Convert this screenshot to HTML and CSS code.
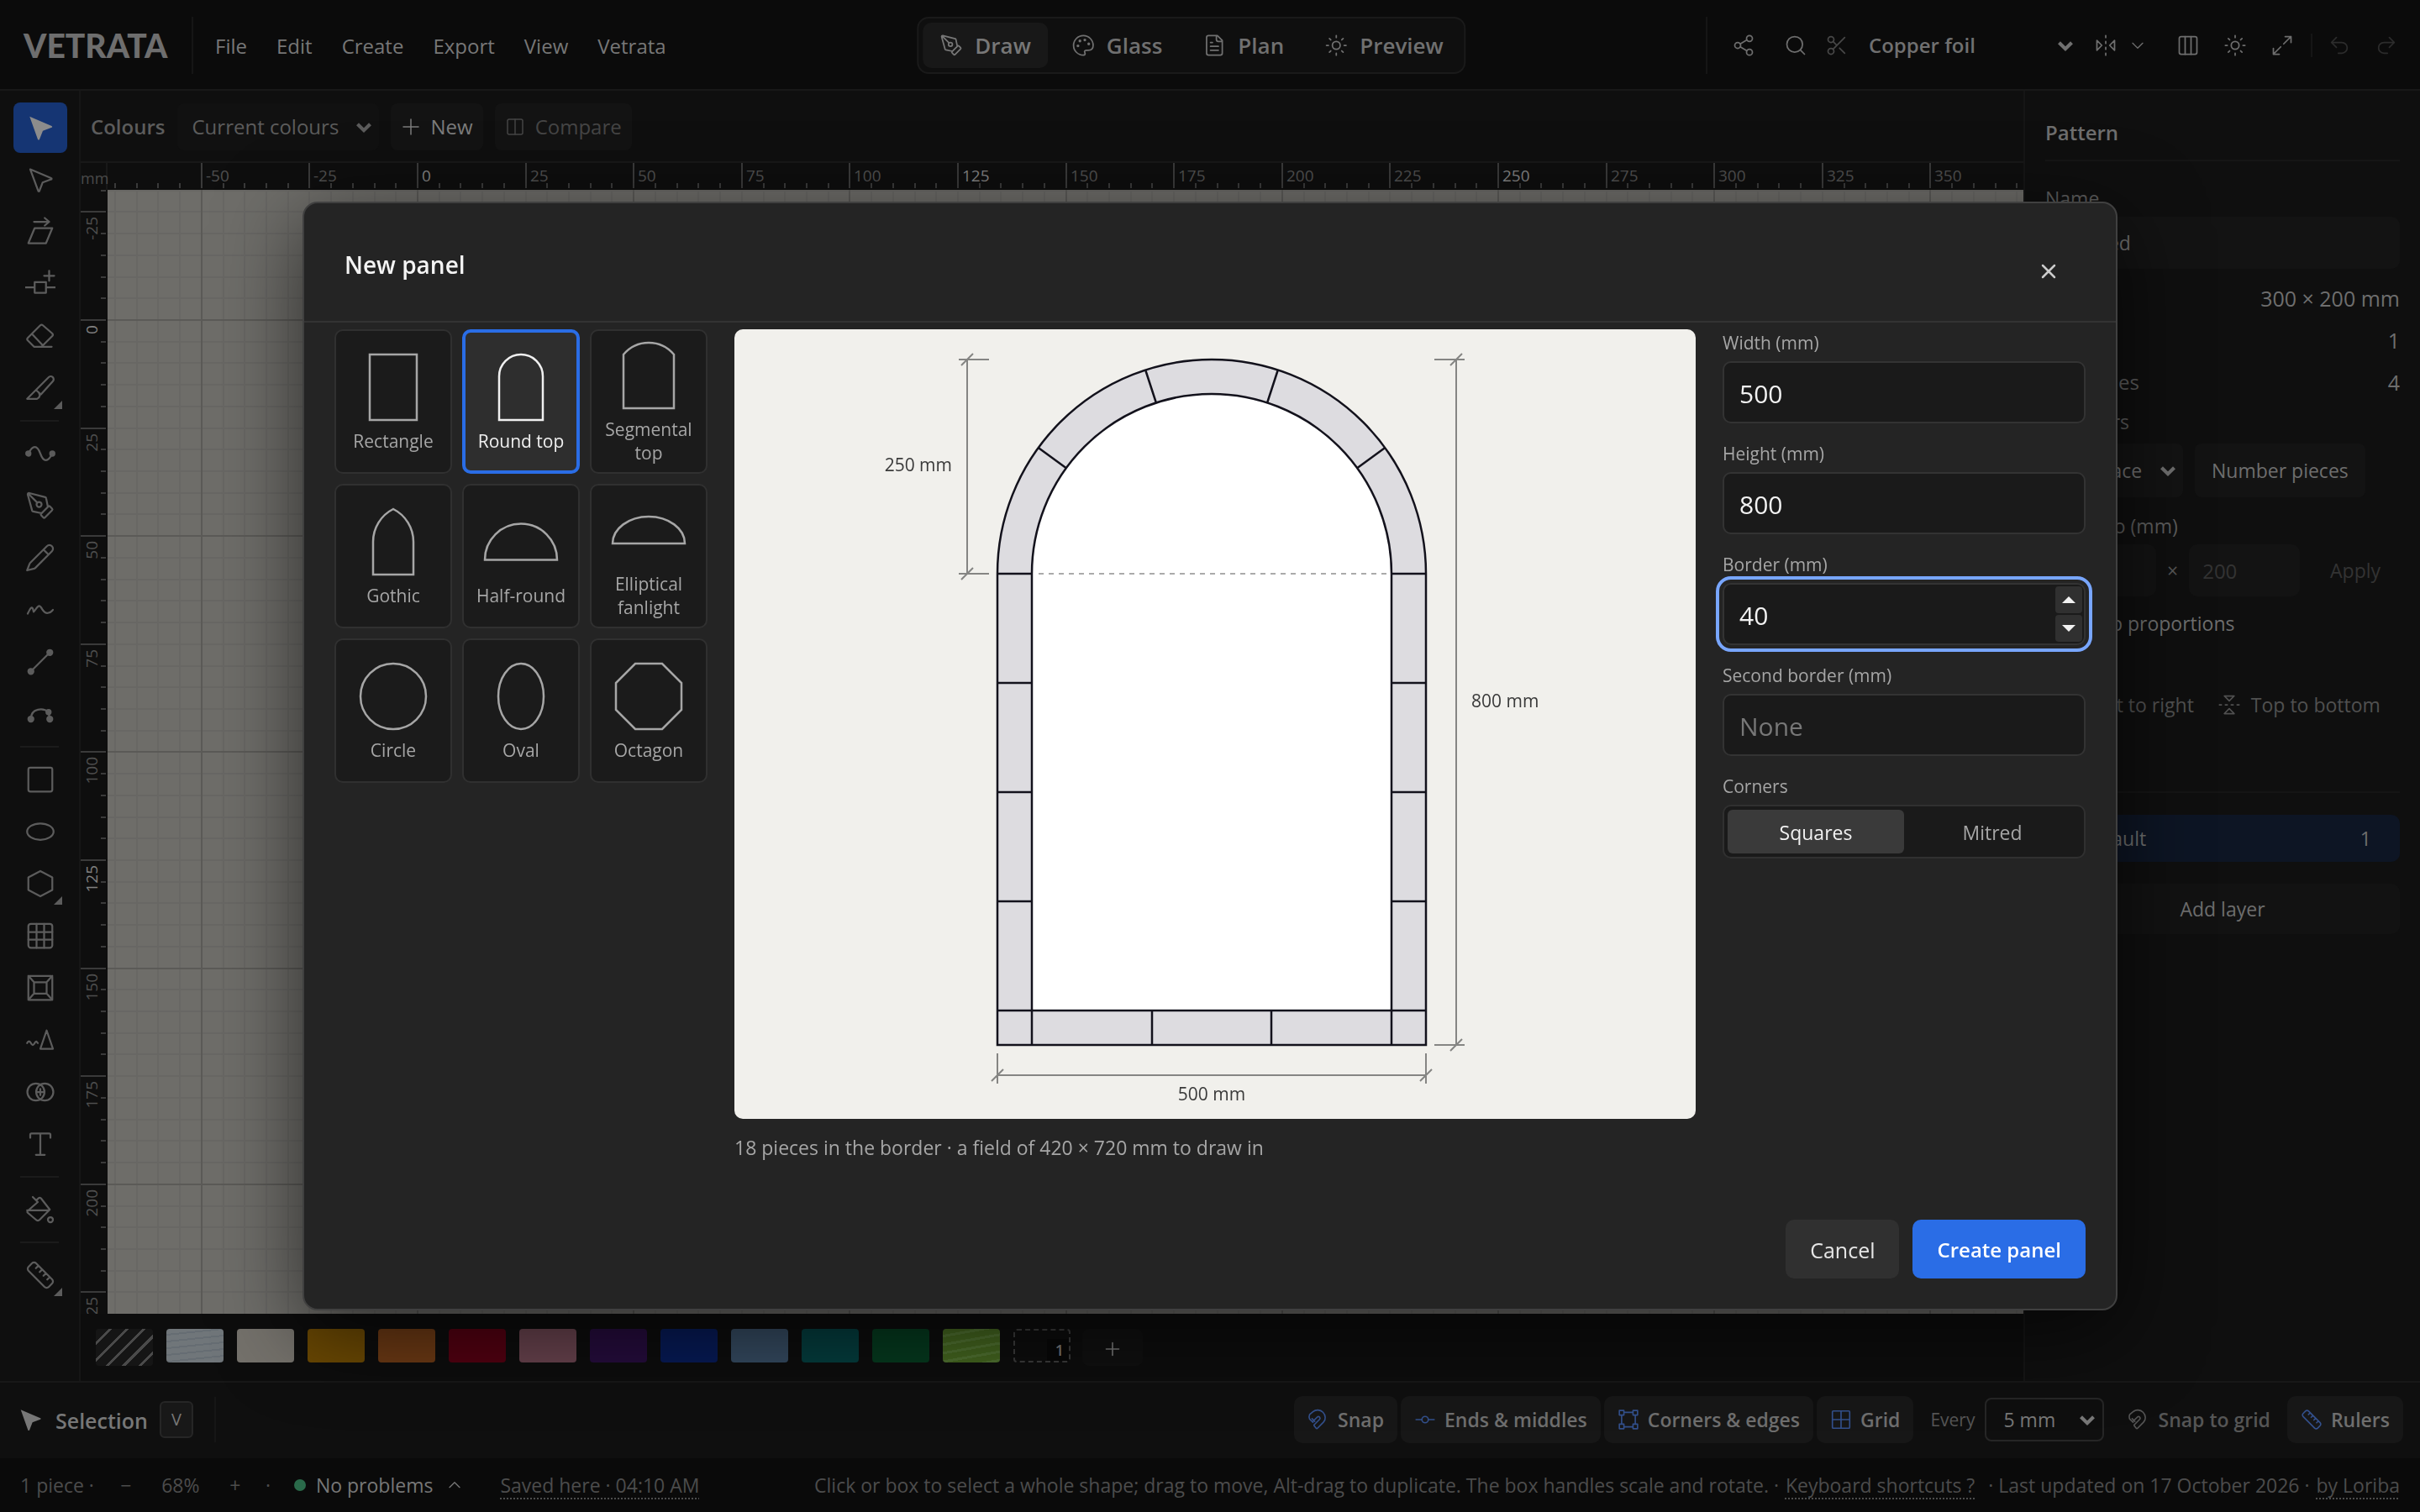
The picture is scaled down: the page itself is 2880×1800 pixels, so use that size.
FILE: index.html
```html
<!DOCTYPE html>
<html lang="en">
<head>
<meta charset="utf-8">
<title>Vetrata – New panel</title>
<link rel="stylesheet" href="styles.css">
</head>
<body>
<svg class="sprite" aria-hidden="true">
  <symbol id="i-pointer" viewBox="0 0 24 24"><path d="M3.5 3.2 21 10.6a.7.7 0 0 1 0 1.3l-7 2.6-2.7 6.8a.7.7 0 0 1-1.3 0Z" fill="currentColor" stroke="none"/></symbol>
  <symbol id="i-pointer-o" viewBox="0 0 24 24"><path d="M4 3.7 20.5 10.7a.5.5 0 0 1 0 1l-6.7 2.5-2.5 6.5a.5.5 0 0 1-1 0Z"/></symbol>
  <symbol id="i-skew" viewBox="0 0 24 24"><path d="M7.500 9h14l-5 12h-14ZM7 4h12M15.500 1l3.500 3-3.500 3"/></symbol>
  <symbol id="i-addnode" viewBox="0 0 24 24"><path d="M7.500 10.500h9v8.500h-9zM0 14.750h7.500M16.500 14.750H24M19 1.500v8M15 5.500h8"/></symbol>
  <symbol id="i-eraser" viewBox="0 0 24 24"><path d="M7 20.500 2 15.500a1.500 1.500 0 0 1 0-2L12 3.500a1.500 1.500 0 0 1 2 0L21.500 10a1.500 1.500 0 0 1 0 2L13 20.500ZM5.500 10.500l8.500 9M7 20.500h14"/></symbol>
  <symbol id="i-knife" viewBox="0 0 24 24"><path d="M8.500 13.500 18.500 3.500a2 2 0 0 1 3.500 3L12.500 17ZM8.500 13.500 1.500 20.500H9.500a3 3 0 0 0 1.500-4.500"/></symbol>
  <symbol id="i-curve" viewBox="0 0 24 24"><path d="M2.500 12C6 5 9.500 5 12 12s6 7 9.500 0"/><circle cx="2.500" cy="12" r="1.700" fill="currentColor"/><circle cx="21.500" cy="12" r="1.700" fill="currentColor"/></symbol>
  <symbol id="i-pen" viewBox="0 0 24 24"><path d="M15.700 21.300a1 1 0 0 1-1.400 0l-1.600-1.600a1 1 0 0 1 0-1.400l5.600-5.600a1 1 0 0 1 1.400 0l1.600 1.600a1 1 0 0 1 0 1.400zM18 13l-1.400-6.900a1 1 0 0 0-.7-.8L3.200 2a1 1 0 0 0-1.200 1.200l3.500 12.700a1 1 0 0 0 .8.700L13 18M2.300 2.300l7.300 7.300"/><circle cx="11" cy="11" r="2"/></symbol>
  <symbol id="i-pencil" viewBox="0 0 24 24"><path d="M21.200 6.800a2.700 2.700 0 0 0-4-4L4 16a2 2 0 0 0-.5.800L1.500 22l5.700-1.400a2 2 0 0 0 .8-.5zM14.500 5.500l4 4"/></symbol>
  <symbol id="i-scribble" viewBox="0 0 24 24"><path d="M2 15c2-4 3-6 4-4s0 4 2 1 3-4 4.500-2 2.500 5 5.500 4.500 3-1.500 4-2.500"/></symbol>
  <symbol id="i-line" viewBox="0 0 24 24"><path d="M4.500 19.500l15-15"/><circle cx="4.500" cy="19.500" r="2" fill="currentColor"/><circle cx="19.500" cy="4.500" r="2" fill="currentColor"/></symbol>
  <symbol id="i-arc" viewBox="0 0 24 24"><path d="M4.500 16c0-9 10-9 14-5.500"/><circle cx="4.500" cy="16" r="2" fill="currentColor"/><circle cx="19.500" cy="16" r="2" fill="currentColor"/><circle cx="18.500" cy="10.500" r="1.700" fill="currentColor"/><path d="M18.500 10.500l1 5.500"/></symbol>
  <symbol id="i-rect" viewBox="0 0 24 24"><rect x="2.500" y="2.500" width="19" height="19" rx="1.500"/></symbol>
  <symbol id="i-ellipse" viewBox="0 0 24 24"><ellipse cx="12" cy="12" rx="10.500" ry="6.500"/></symbol>
  <symbol id="i-hex" viewBox="0 0 24 24"><path d="M12 2l9.500 5v10L12 22l-9.500-5V7z"/></symbol>
  <symbol id="i-grid" viewBox="0 0 24 24"><rect x="2.500" y="2.500" width="19" height="19" rx="2"/><path d="M2.500 9h19M2.500 15h19M9 2.500v19M15 2.500v19"/></symbol>
  <symbol id="i-frame" viewBox="0 0 24 24"><rect x="2.500" y="2.500" width="19" height="19" rx="1"/><path d="M7 7.500h10v9H7zM2.500 2.500l4.500 5M21.500 2.500l-4.500 5M2.500 21.500l4.500-5M21.500 21.500l-4.500-5"/></symbol>
  <symbol id="i-smooth" viewBox="0 0 24 24"><path d="M1.500 14.500c1-2 2-2 3 0s2 2 3 0 1.500-1.500 2.500 0M12 19 17 4.500 22 19z"/></symbol>
  <symbol id="i-venn" viewBox="0 0 24 24"><circle cx="8.500" cy="12" r="6.800"/><circle cx="15.500" cy="12" r="6.800"/><path d="M12 9.500v5M9.500 12h5"/></symbol>
  <symbol id="i-type" viewBox="0 0 24 24"><path d="M4 7V4.500a1 1 0 0 1 1-1h14a1 1 0 0 1 1 1V7M12 3.500v17M8.500 20.500h7"/></symbol>
  <symbol id="i-bucket" viewBox="0 0 24 24"><path d="M6 2l4 4M10 6 2 13a1 1 0 0 0 0 1.500L8.500 20a2 2 0 0 0 3 0L19.500 12 12.500 3a1.500 1.500 0 0 0-2 0L9 4.500M1.500 12.500h17.500"/><circle cx="20" cy="20" r="2"/></symbol>
  <symbol id="i-ruler" viewBox="0 0 24 24"><path d="M21.300 15.300a2.400 2.400 0 0 1 0 3.400l-2.600 2.600a2.400 2.400 0 0 1-3.400 0L2.700 8.700a2.400 2.400 0 0 1 0-3.400l2.600-2.600a2.400 2.400 0 0 1 3.400 0ZM14.500 12.500l2-2M11.500 9.500l2-2M8.500 6.500l2-2M17.500 15.500l2-2"/></symbol>
  <symbol id="i-palette" viewBox="0 0 24 24"><path d="M12 22a10 10 0 1 1 10-10c0 4-2.500 5-5 5h-2c-2 0-2 1.500-1.500 2.500S14 22 12 22Z"/><g fill="currentColor"><circle cx="13.500" cy="6.500" r=".7"/><circle cx="17.500" cy="10.500" r=".7"/><circle cx="6.500" cy="12.500" r=".7"/><circle cx="8.500" cy="7.500" r=".7"/></g></symbol>
  <symbol id="i-file" viewBox="0 0 24 24"><path d="M15 2H6a2 2 0 0 0-2 2v16a2 2 0 0 0 2 2h12a2 2 0 0 0 2-2V7zM14 2v4a2 2 0 0 0 2 2h4M8 9h2M8 13h8M8 17h8"/></symbol>
  <symbol id="i-sun" viewBox="0 0 24 24"><circle cx="12" cy="12" r="4"/><path d="M12 2v2M12 20v2M5 5l1.400 1.400M17.600 17.600 19 19M2 12h2M20 12h2M6.400 17.600 5 19M19 5l-1.400 1.400"/></symbol>
  <symbol id="i-share" viewBox="0 0 24 24"><circle cx="18" cy="5" r="3"/><circle cx="6" cy="12" r="3"/><circle cx="18" cy="19" r="3"/><path d="M8.600 13.500l6.800 4M15.400 6.500l-6.800 4"/></symbol>
  <symbol id="i-search" viewBox="0 0 24 24"><circle cx="11" cy="11" r="8"/><path d="M21 21l-4.300-4.300"/></symbol>
  <symbol id="i-scissors" viewBox="0 0 24 24"><circle cx="6" cy="6" r="3"/><circle cx="6" cy="18" r="3"/><path d="M8.100 8.100 12 12M20 4 8.100 15.900M14.800 14.800 20 20"/></symbol>
  <symbol id="i-mirror" viewBox="0 0 24 24"><path d="M3 7l5 5-5 5zM21 7l-5 5 5 5zM12 20v2M12 14v2M12 8v2M12 2v2"/></symbol>
  <symbol id="i-columns" viewBox="0 0 24 24"><rect x="3" y="3" width="18" height="18" rx="2"/><path d="M9 3v18M15 3v18"/></symbol>
  <symbol id="i-split" viewBox="0 0 24 24"><rect x="3" y="3" width="18" height="18" rx="2"/><path d="M12 3v18"/></symbol>
  <symbol id="i-expand" viewBox="0 0 24 24"><path d="M15 3h6v6M21 3l-7.500 7.500M3 21l7.500-7.500M9 21H3v-6"/></symbol>
  <symbol id="i-undo" viewBox="0 0 24 24"><path d="M9 14 4 9l5-5M4 9h10.500a5.500 5.500 0 0 1 0 11H11"/></symbol>
  <symbol id="i-redo" viewBox="0 0 24 24"><path d="M15 14l5-5-5-5M20 9H9.500a5.500 5.500 0 0 0 0 11H13"/></symbol>
  <symbol id="i-chev" viewBox="0 0 24 24"><path d="M3 8l9 9 9-9"/></symbol>
  <symbol id="i-up" viewBox="0 0 24 24"><path d="M3 16l9-9 9 9"/></symbol>
  <symbol id="i-plus" viewBox="0 0 24 24"><path d="M12 3v18M3 12h18"/></symbol>
  <symbol id="i-x" viewBox="0 0 24 24"><path d="M5 5l14 14M19 5 5 19"/></symbol>
  <symbol id="i-magnet" viewBox="0 0 24 24"><path d="M6 15l-3.600-3.600a6 6 0 0 1 0-5L6 3.400a8 8 0 0 1 11 .5c3 3 3.500 8 .5 11l-6.500 6.600a1 1 0 0 1-1.500 0L7.500 19a1 1 0 0 1 0-1.500l6-6a1.800 1.800 0 0 0-2.500-2.500L6 14M5 11l3 3"/></symbol>
  <symbol id="i-node" viewBox="0 0 24 24"><circle cx="12" cy="12" r="3.500"/><path d="M2 12h6.500M15.500 12H22"/></symbol>
  <symbol id="i-corners" viewBox="0 0 24 24"><path d="M2 2h5v5H2zM17 2h5v5h-5zM2 17h5v5H2zM17 17h5v5h-5zM7 4h10M7 20h10M4.500 7v10M19.500 7v10"/></symbol>
  <symbol id="i-window" viewBox="0 0 24 24"><rect x="2.500" y="2.500" width="19" height="19" rx="1"/><path d="M12 2.500v19M2.500 12h19"/></symbol>
</svg>

<div class="app">
  <header class="topbar">
    <div class="brand">VETRATA</div>
    <nav class="menus">
      <button>File</button><button>Edit</button><button>Create</button><button>Export</button><button>View</button><button>Vetrata</button>
    </nav>
    <div class="modes">
      <button class="mode is-on"><svg class="ic"><use href="#i-pen"/></svg>Draw</button>
      <button class="mode"><svg class="ic"><use href="#i-palette"/></svg>Glass</button>
      <button class="mode"><svg class="ic"><use href="#i-file"/></svg>Plan</button>
      <button class="mode"><svg class="ic"><use href="#i-sun"/></svg>Preview</button>
    </div>
    <div class="actions">
      <button class="iconbtn" aria-label="Share"><svg class="ic"><use href="#i-share"/></svg></button>
      <button class="iconbtn" aria-label="Search"><svg class="ic"><use href="#i-search"/></svg></button>
      <label class="technique"><svg class="ic dim"><use href="#i-scissors"/></svg>
        <span class="select foil"><select aria-label="Technique"><option>Copper foil</option></select><svg class="chev"><use href="#i-chev"/></svg></span></label>
      <button class="mirrorbtn" aria-label="Symmetry"><svg class="ic"><use href="#i-mirror"/></svg><svg class="tiny"><use href="#i-chev"/></svg></button>
      <button class="iconbtn" aria-label="Panels"><svg class="ic"><use href="#i-columns"/></svg></button>
      <button class="iconbtn" aria-label="Theme"><svg class="ic"><use href="#i-sun"/></svg></button>
      <button class="iconbtn" aria-label="Full screen"><svg class="ic"><use href="#i-expand"/></svg></button>
      <span class="history">
        <button class="iconbtn" aria-label="Undo" disabled><svg class="ic"><use href="#i-undo"/></svg></button>
        <button class="iconbtn" aria-label="Redo" disabled><svg class="ic"><use href="#i-redo"/></svg></button>
      </span>
    </div>
  </header>

  <main class="workspace">
    <aside class="tools">
      <div class="toolgroup">
        <button class="tool is-on" aria-label="Selection"><svg><use href="#i-pointer"/></svg></button>
        <button class="tool" aria-label="Direct selection"><svg><use href="#i-pointer-o"/></svg></button>
        <button class="tool" aria-label="Skew"><svg><use href="#i-skew"/></svg></button>
        <button class="tool" aria-label="Add node"><svg><use href="#i-addnode"/></svg></button>
        <button class="tool" aria-label="Eraser"><svg><use href="#i-eraser"/></svg></button>
        <button class="tool has-more" aria-label="Knife"><svg><use href="#i-knife"/></svg></button>
      </div>
      <div class="toolgroup">
        <button class="tool" aria-label="Curve"><svg><use href="#i-curve"/></svg></button>
        <button class="tool" aria-label="Pen"><svg><use href="#i-pen"/></svg></button>
        <button class="tool" aria-label="Pencil"><svg><use href="#i-pencil"/></svg></button>
        <button class="tool" aria-label="Freehand"><svg><use href="#i-scribble"/></svg></button>
        <button class="tool" aria-label="Line"><svg><use href="#i-line"/></svg></button>
        <button class="tool" aria-label="Arc"><svg><use href="#i-arc"/></svg></button>
      </div>
      <div class="toolgroup">
        <button class="tool" aria-label="Rectangle"><svg><use href="#i-rect"/></svg></button>
        <button class="tool" aria-label="Ellipse"><svg><use href="#i-ellipse"/></svg></button>
        <button class="tool has-more" aria-label="Polygon"><svg><use href="#i-hex"/></svg></button>
        <button class="tool" aria-label="Grid"><svg><use href="#i-grid"/></svg></button>
        <button class="tool" aria-label="Border"><svg><use href="#i-frame"/></svg></button>
        <button class="tool" aria-label="Shape from sketch"><svg><use href="#i-smooth"/></svg></button>
        <button class="tool" aria-label="Combine"><svg><use href="#i-venn"/></svg></button>
        <button class="tool" aria-label="Text"><svg><use href="#i-type"/></svg></button>
      </div>
      <div class="toolgroup">
        <button class="tool" aria-label="Fill"><svg><use href="#i-bucket"/></svg></button>
      </div>
      <div class="toolgroup">
        <button class="tool has-more" aria-label="Measure"><svg><use href="#i-ruler"/></svg></button>
      </div>
    </aside>

    <section class="stage">
      <div class="colourbar">
        <label for="palette">Colours</label>
        <span class="select palette"><select id="palette"><option>Current colours</option></select><svg class="chev"><use href="#i-chev"/></svg></span>
        <button class="chip"><svg class="ic"><use href="#i-plus"/></svg>New</button>
        <button class="chip" disabled><svg class="ic"><use href="#i-split"/></svg>Compare</button>
      </div>
      <div class="board">
        <div class="unit">mm</div>
        <svg class="ruler-x" id="ruler-x"></svg>
        <svg class="ruler-y" id="ruler-y"></svg>
        <svg class="canvas" id="canvas"></svg>
      </div>
      <div class="tray">
        <button class="swatch hatch" aria-label="No glass"></button>
        <button class="swatch clear" aria-label="Clear"></button>
        <button class="swatch" style="background:#74716b" aria-label="Opal"></button>
        <button class="swatch" style="background:#6a4803" aria-label="Amber"></button>
        <button class="swatch" style="background:#6b3914" aria-label="Orange"></button>
        <button class="swatch" style="background:#520111" aria-label="Red"></button>
        <button class="swatch" style="background:#67424d" aria-label="Pink"></button>
        <button class="swatch" style="background:#250c3c" aria-label="Violet"></button>
        <button class="swatch" style="background:#071a55" aria-label="Cobalt"></button>
        <button class="swatch" style="background:#34495f" aria-label="Sky"></button>
        <button class="swatch" style="background:#043c3d" aria-label="Teal"></button>
        <button class="swatch" style="background:#05391e" aria-label="Green"></button>
        <button class="swatch streaky" aria-label="Streaky green"></button>
        <button class="swatch empty" aria-label="Unassigned"><span>1</span></button>
        <button class="addswatch" aria-label="Add glass"><svg><use href="#i-plus"/></svg></button>
      </div>
    </section>

    <aside class="inspector">
      <h2>Pattern</h2>
      <label for="pname">Name</label>
      <input id="pname" type="text" value="Untitled">
      <dl>
        <div><dt>Size</dt><dd>300 × 200 mm</dd></div>
        <div><dt>Pieces</dt><dd>1</dd></div>
        <div><dt>Lead lines</dt><dd>4</dd></div>
      </dl>
      <label for="numbers">Numbers</label>
      <div class="row numbers">
        <span class="select place"><select id="numbers"><option>In place</option></select><svg class="chev"><use href="#i-chev"/></svg></span>
        <button class="chip">Number pieces</button>
      </div>
      <label for="scalew">Resize to (mm)</label>
      <div class="row scale">
        <input id="scalew" type="text" value="300"><span>×</span><input type="text" value="200" aria-label="Scale height"><button disabled>Apply</button>
      </div>
      <label class="check"><input type="checkbox" checked>Keep proportions</label>
      <div class="row flips">
        <button><svg class="ic"><use href="#i-mirror"/></svg>Left to right</button>
        <button><svg class="ic turned"><use href="#i-mirror"/></svg>Top to bottom</button>
      </div>
      <div class="layers">
        <button class="layer"><span>Default</span><span>1</span></button>
        <button class="addlayer">Add layer</button>
      </div>
    </aside>
  </main>

  <section class="optionbar">
    <div class="current"><svg class="ic"><use href="#i-pointer"/></svg><strong>Selection</strong><kbd>V</kbd></div>
    <div class="snaps">
      <button class="snap is-on"><svg class="ic"><use href="#i-magnet"/></svg>Snap</button>
      <button class="snap is-on"><svg class="ic"><use href="#i-node"/></svg>Ends &amp; middles</button>
      <button class="snap is-on"><svg class="ic"><use href="#i-corners"/></svg>Corners &amp; edges</button>
      <button class="snap is-on"><svg class="ic"><use href="#i-window"/></svg>Grid</button>
      <label for="every">Every</label>
      <span class="select every"><select id="every"><option>5 mm</option></select><svg class="chev"><use href="#i-chev"/></svg></span>
      <button class="snap"><svg class="ic"><use href="#i-magnet"/></svg>Snap to grid</button>
      <button class="snap is-on"><svg class="ic"><use href="#i-ruler"/></svg>Rulers</button>
    </div>
  </section>

  <footer class="status">
    <div class="left">
      <span>1 piece ·</span>
      <button class="zoom">−</button><span class="pct">68%</span><button class="zoom">+</button><span class="sep">·</span>
      <button class="problems"><i></i>No problems<svg><use href="#i-up"/></svg></button>
      <a href="#saved">Saved here · 04:10 AM</a>
    </div>
    <div class="right">
      <span>Click or box to select a whole shape; drag to move, Alt-drag to duplicate. The box handles scale and rotate. ·</span>
      <a href="#keys">Keyboard shortcuts ?</a>
      <span class="updated">· Last updated on 17 October 2026 ·</span>
      <a href="#loriba">by Loriba</a>
    </div>
  </footer>
</div>

<div class="backdrop">
  <section class="dialog" role="dialog" aria-modal="true" aria-labelledby="dlg-title">
    <header><h1 id="dlg-title">New panel</h1><button class="close" aria-label="Close"><svg><use href="#i-x"/></svg></button></header>
    <div class="content">
      <div class="shapes">
        <button><svg viewBox="0 0 96 88"><path d="M20 5h56v78H20z"/></svg>Rectangle</button>
        <button class="is-on"><svg viewBox="0 0 96 88"><path d="M22 83V31a26 26 0 0 1 52 0v52z"/></svg>Round top</button>
        <button><svg viewBox="0 0 96 88"><path d="M18 83V19a39 39 0 0 1 60 0v64z"/></svg>Segmental top</button>
        <button><svg viewBox="0 0 96 88"><path d="M24 83V44a43.700 43.700 0 0 1 24-39 43.700 43.700 0 0 1 24 39v39z"/></svg>Gothic</button>
        <button><svg viewBox="0 0 96 88"><path d="M5 65.500a43 43 0 0 1 86 0z"/></svg>Half-round</button>
        <button><svg viewBox="0 0 96 88"><path d="M5 60a43 32 0 0 1 86 0z"/></svg>Elliptical fanlight</button>
        <button><svg viewBox="0 0 96 88"><circle cx="48" cy="44" r="39"/></svg>Circle</button>
        <button><svg viewBox="0 0 96 88"><ellipse cx="48" cy="44" rx="27" ry="39"/></svg>Oval</button>
        <button><svg viewBox="0 0 96 88"><path d="M32 5h32l23 23v32L64 83H32L9 60V28z"/></svg>Octagon</button>
      </div>

      <figure class="preview">
        <svg viewBox="0 0 1144 940" role="img" aria-label="Panel preview">
          <path class="glass" d="M313 852V291a255 255 0 0 1 510 0v561z"/>
          <path class="field" d="M354 811V291a214 214 0 0 1 428 0v520z"/>
          <path class="lead" d="M313 291h41M313 421h41M313 551h41M313 681h41M313 811h41v41M782 291h41M782 421h41M782 551h41M782 681h41M823 811h-41v41M497 811v41M639 811v41M646.800 48.500l-12.700 39M489.200 48.500l12.700 39M774.300 141.100l-33.200 24.100M361.700 141.100l33.200 24.100"/>
          <path class="spring" d="M362 291h420"/>
          <path class="dim" d="M277 36v255M267 36h36M267 291h36M270 43l14-14M270 298l14-14M859 36v816M833 36h36M833 852h36M852 43l14-14M852 859l14-14M313 888h510M313 862v36M823 862v36M306 895l14-14M816 895l14-14"/>
          <text x="259" y="169" text-anchor="end">250 mm</text>
          <text x="877" y="450">800 mm</text>
          <text x="568" y="918" text-anchor="middle">500 mm</text>
        </svg>
        <figcaption>18 pieces in the border · a field of 420 × 720 mm to draw in</figcaption>
      </figure>

      <form class="fields">
        <div class="field-row"><label for="w">Width (mm)</label><input id="w" type="number" value="500"></div>
        <div class="field-row"><label for="h">Height (mm)</label><input id="h" type="number" value="800"></div>
        <div class="field-row"><label for="b">Border (mm)</label>
          <div class="stepper"><input id="b" type="number" value="40"><span class="steps"><button type="button" aria-label="Increase"><svg viewBox="0 0 16 8"><path d="M0 8 8 0l8 8z"/></svg></button><button type="button" aria-label="Decrease"><svg viewBox="0 0 16 8"><path d="M0 0l8 8 8-8z"/></svg></button></span></div></div>
        <div class="field-row"><label for="b2">Second border (mm)</label><input id="b2" type="number" placeholder="None"></div>
        <div class="field-row"><span class="lbl">Corners</span><div class="segmented"><button type="button" class="is-on">Squares</button><button type="button">Mitred</button></div></div>
      </form>
    </div>
    <footer><button class="cancel">Cancel</button><button class="create">Create panel</button></footer>
  </section>
</div>
<script src="rulers.js"></script>
</body>
</html>
```
FILE: styles.css
```css
* { box-sizing: border-box; }
html, body { margin: 0; height: 100%; }
body {
  font-family: "Open Sans", "Noto Sans", sans-serif;
  font-size: 24px;
  line-height: 32px;
  color: #777;
  background: #0b0b0b;
}
button, input, select { font: inherit; color: inherit; margin: 0; }
button { background: none; border: 0; padding: 0; }
select { appearance: none; background: none; border: 0; padding: 0; width: 100%; }
svg { fill: none; stroke: currentColor; stroke-width: 1.5; stroke-linecap: round; stroke-linejoin: round; flex: none; }
a { color: inherit; text-decoration: underline dotted; text-decoration-thickness: 2px; text-underline-offset: 6px; }
.sprite { display: none; }
.ic { width: 28px; height: 28px; }
.dim { opacity: .6; }

.select { display: grid; align-items: center; border-radius: 8px; }
.select > * { grid-area: 1 / 1; }
.select .chev { width: 20px; height: 20px; justify-self: end; stroke-width: 5; stroke-linecap: butt; stroke-linejoin: miter; pointer-events: none; }

.app { height: 100vh; display: grid; grid-template-rows: auto 1fr auto auto; overflow: hidden; }

/* top bar */
.topbar { display: grid; grid-template-columns: auto auto 1fr; align-items: center; padding: 20px 12px 18px 28px; border-bottom: 2px solid #181818; position: relative; }
.brand { font-family: Lato, sans-serif; font-weight: 900; font-size: 39px; line-height: 68px; color: #6e6e6e; width: 202px; border-right: 2px solid #161616; }
.menus { display: flex; gap: 35px; margin-left: 26px; padding-top: 2px; }
.modes { position: absolute; left: 50%; top: 20px; transform: translateX(-50%); margin-left: -22px; display: flex; gap: 8px; height: 68px; padding: 5px; border: 2px solid #1a1a1a; border-radius: 14px; background: #0f0f0f; }
.mode { display: flex; align-items: center; gap: 14px; padding: 0 20px; border-radius: 10px; font-weight: 600; color: #707070; font-size: 26px; }
.mode.is-on { background: #181818; color: #777; }
.actions { justify-self: end; display: flex; align-items: center; height: 68px; padding-left: 12px; border-left: 2px solid #161616; color: #6e6e6e; }
.iconbtn { width: 56px; height: 56px; display: grid; place-items: center; }
.actions > .iconbtn:nth-child(-n+2) { width: 62px; }
.technique { display: flex; align-items: center; gap: 24px; margin-left: 4px; font-weight: 600; color: #707070; }
.foil { width: 244px; }
.mirrorbtn { display: flex; align-items: center; gap: 16px; margin: 0 24px; }
.tiny { width: 16px; height: 16px; stroke-width: 2; }
.history { display: flex; align-items: center; margin-left: 6px; padding-left: 4px; color: #2c2c2c; border-left: 2px solid #161616; height: 28px; }

/* workspace */
.workspace { display: grid; grid-template-columns: 96px 1fr 472px; min-height: 0; border-bottom: 2px solid #181818; background: #0f0f0f; }
.tools { border-right: 2px solid #161616; padding: 14px 0 0 16px; color: #5c5c5c; overflow: hidden; }
.toolgroup { display: grid; gap: 2px; }
.toolgroup + .toolgroup::before { content: ""; height: 2px; width: 46px; margin: 6px 8px; background: #1b1b1b; }
.toolgroup + .toolgroup { padding-top: 2px; }
.tool { width: 64px; height: 60px; border-radius: 8px; display: grid; place-items: center; position: relative; }
.tool svg { width: 36px; height: 36px; }
.tool.is-on { background: #153573; color: #8c8c8c; }
.has-more::after { content: ""; position: absolute; right: 6px; bottom: 5px; border: 5px solid; border-color: transparent #5c5c5c #5c5c5c transparent; }

.stage { display: grid; grid-template-rows: auto 1fr auto; min-width: 0; min-height: 0; }
.colourbar { display: flex; align-items: center; height: 86px; padding: 2px 12px 0; gap: 14px; border-bottom: 2px solid #181818; color: #5c5c5c; font-weight: 600; }
.colourbar .select, .colourbar .chip { font-weight: 400; }
.palette { height: 56px; width: 240px; padding: 0 8px 0 18px; background: #111; }
.chip { height: 56px; display: flex; align-items: center; gap: 12px; padding: 0 12px; border-radius: 8px; background: #131313; color: #7c7c7c; }
.chip:disabled { color: #454545; }
.chip .ic { width: 24px; height: 24px; }
.board { display: grid; grid-template-columns: 32px 1fr; grid-template-rows: 32px 1fr; min-height: 0; background: #0e0e0e; overflow: hidden; }
.board svg { display: block; width: 100%; height: 100%; min-height: 0; stroke: none; }
.unit { font-size: 18px; line-height: 36px; text-align: center; color: #4a4a4a; border-right: 2px solid #181818; }
.board text { font-size: 19px; fill: #4f4f4f; }
.board text.strong { fill: #808080; }
.tick { stroke: #3a3a3a; stroke-width: 2; stroke-linecap: butt; }
.canvas { background: #6e6d69; }
.minor { stroke: #686764; stroke-width: 2; }
.major { stroke: #5b5a57; stroke-width: 2; }

.tray { display: flex; align-items: flex-start; gap: 16px; height: 80px; padding: 18px 18px 0; background: #0d0d0d; }
.swatch { width: 68px; height: 40px; border-radius: 4px; }
.tray .hatch { height: 44px; background: repeating-linear-gradient(135deg, #151515 0 11px, #4a4a4a 11px 14px); }
.clear { background: repeating-linear-gradient(174deg, #70767a 0 6px, #666d73 6px 8px); }
.streaky { background: repeating-linear-gradient(170deg, #43641f 0 7px, #4f7030 7px 10px); }
.empty { border: 2px dashed #3a3a3a; display: flex; justify-content: flex-end; align-items: flex-end; font-size: 18px; line-height: 26px; font-weight: 600; }
.empty span { background: #080808; padding: 0 6px 0 10px; }
.addswatch { width: 72px; height: 44px; background: #101010; border-radius: 8px; display: grid; place-items: center; margin-left: -2px; padding-top: 4px; }
.addswatch svg { width: 20px; height: 20px; stroke-width: 2; }

/* inspector */
.inspector { border-left: 2px solid #161616; padding: 0 24px; color: #6e6e6e; overflow: hidden; font-size: 23px; }
.inspector h2 { font-size: 24px; line-height: 32px; font-weight: 600; margin: 0 0 28px; padding: 34px 0 16px; border-bottom: 2px solid #151515; }
.inspector label { display: block; color: #5c5c5c; }
.inspector input[type=text] { width: 100%; height: 62px; border: 0; border-radius: 10px; padding: 0 16px; background: #131313; display: block; margin-top: 6px; }
.inspector dl { margin: 10px 0 6px; }
.inspector dl div { display: flex; justify-content: space-between; line-height: 50px; }
.inspector dt { color: #5c5c5c; font-size: 24px; }
.inspector dd { margin: 0; font-size: 25px; }
.row { display: flex; align-items: center; }
.numbers { gap: 14px; margin: 10px 0 18px; }
.numbers .chip { height: 64px; padding: 0 20px; color: #6e6e6e; }
.place { width: 164px; height: 64px; padding: 0 8px 0 32px; background: #131313; }
.inspector .scale input { width: 132px; margin: 0; color: #333; font-size: 24px; }
.scale { gap: 13px; margin: 6px 0 14px; color: #555; }
.scale button { flex: 1; color: #333; }
.inspector .check { display: flex; align-items: center; gap: 12px; color: #6e6e6e; line-height: 36px; }
.check input { width: 26px; height: 26px; }
.flips { gap: 28px; margin: 60px 0 84px; padding-left: 12px; color: #505050; }
.flips button { display: flex; align-items: center; gap: 12px; line-height: 38px; }
.turned { transform: rotate(90deg); }
.layers { border-top: 2px solid #151515; padding-top: 26px; display: grid; gap: 26px; }
.layer { display: flex; justify-content: space-between; align-items: center; height: 56px; padding: 0 34px 0 42px; border-radius: 10px; background: #0d1524; }
.addlayer { height: 60px; border-radius: 10px; background: #121212; }

/* option bar and status */
.optionbar { display: flex; justify-content: space-between; align-items: center; height: 90px; padding: 0 20px 2px; background: #0f0f0f; }
.current { display: flex; align-items: center; gap: 14px; height: 54px; padding-right: 25px; border-right: 2px solid #161616; }
.current .ic { width: 32px; height: 32px; }
.current strong { font-weight: 600; font-size: 25px; padding-top: 2px; }
kbd { font: inherit; font-size: 20px; line-height: 40px; width: 40px; text-align: center; background: #181818; border: 2px solid #262626; border-radius: 6px; }
.snaps { display: flex; align-items: center; gap: 4px; }
.snap { display: flex; align-items: center; gap: 10px; height: 56px; padding: 0 16px; border-radius: 10px; font-weight: 600; font-size: 23px; color: #555; }
.snap .ic { width: 26px; height: 26px; }
.snap.is-on { background: #171717; color: #6e6e6e; }
.snap.is-on .ic { color: #33508c; }
.snaps label { margin: 0 8px 0 16px; font-size: 21px; color: #555; }
.every { width: 142px; height: 52px; padding: 0 8px 0 20px; border: 2px solid #262626; margin-right: 8px; }
.every select { font-size: 23px; }
.status { display: flex; justify-content: space-between; height: 64px; padding: 0 24px; align-items: center; background: #0a0a0a; color: #4c4c4c; font-size: 23px; }
.status .left, .status .right { display: flex; align-items: center; white-space: nowrap; }
.right { gap: 8px; }
.updated { margin-left: 8px; }
.zoom { width: 40px; }
.pct { width: 90px; text-align: center; }
.left > .zoom:first-of-type { margin-left: 18px; }
.left .sep { margin-left: 16px; }
.problems { display: flex; align-items: center; gap: 12px; margin: 0 46px 0 28px; color: #777; }
.problems i { width: 14px; height: 14px; border-radius: 50%; background: #2a6a4a; }
.problems svg { width: 16px; height: 16px; margin-left: 6px; stroke-width: 2; }

/* dialog */
.backdrop { position: fixed; inset: 0; display: grid; place-items: center; }
.dialog { width: 75%; background: #242424; border: 2px solid #404040; border-radius: 18px; box-shadow: 0 24px 100px rgba(0, 0, 0, .6); color: #a6a6a6; }
.dialog header { display: flex; justify-content: space-between; align-items: center; height: 142px; padding: 22px 48px 0; border-bottom: 2px solid #333; }
.dialog h1 { margin: 0 0 16px; font-size: 28px; line-height: 40px; font-weight: 600; color: #f4f4f4; }
.close { width: 64px; height: 64px; display: grid; place-items: center; color: #ccc; }
.close svg { width: 24px; height: 24px; stroke-width: 2.500; }
.content { display: grid; grid-template-columns: 444px 1fr 432px; gap: 32px; padding: 8px 36px 0; align-items: start; }
.shapes { display: grid; grid-template-columns: repeat(3, 1fr); gap: 12px; }
.shapes button { height: 172px; display: flex; flex-direction: column; align-items: center; justify-content: center; gap: 6px; font-size: 21px; line-height: 28px; background: #1b1b1b; border: 2px solid #303030; border-radius: 10px; padding: 0 8px; }
.shapes svg { width: 96px; height: 88px; stroke-width: 2.500; stroke-linejoin: miter; }
.shapes .is-on { background: #2e2e2e; border: 4px solid #2a6de6; color: #f0f0f0; padding: 0 4px; }
.preview { margin: 0; }
.preview svg { display: block; width: 100%; background: #f1f0ec; border-radius: 10px; stroke-linecap: butt; stroke-linejoin: miter; }
.glass { fill: #dddce0; stroke: #13121c; stroke-width: 2.500; }
.field { fill: #fff; stroke: #13121c; stroke-width: 2.500; }
.lead { stroke: #13121c; stroke-width: 2.500; }
.spring { stroke: #aaa; stroke-width: 2; stroke-dasharray: 6 6; }
.preview .dim { stroke: #858583; stroke-width: 2; opacity: 1; }
.preview text { font-size: 21px; fill: #3a3a3a; stroke: none; }
.preview figcaption { margin-top: 18px; line-height: 32px; font-size: 23px; }
.fields { padding-top: 2px; display: grid; gap: 22px; }
.field-row { display: grid; gap: 8px; }
.field-row label, .lbl { font-size: 21px; line-height: 28px; }
.field-row input { width: 100%; height: 74px; border: 2px solid #333; border-radius: 10px; background: #1a1a1a; color: #f2f2f2; font-size: 30px; padding: 2px 18px 0; appearance: textfield; }
.field-row input::-webkit-inner-spin-button { display: none; }
.field-row input::placeholder { color: #777; }
.stepper { display: grid; align-items: center; border-radius: 10px; outline: 4px solid #78a6ff; outline-offset: 4px; }
.stepper > * { grid-area: 1 / 1; }
.steps { justify-self: end; display: grid; gap: 2px; margin-right: 4px; }
.steps button { width: 32px; height: 32px; border-radius: 4px; background: #303030; display: grid; place-items: center; }
.steps svg { width: 16px; height: 8px; fill: #f2f2f2; stroke: none; }
.segmented { display: grid; grid-template-columns: 1fr 1fr; height: 64px; padding: 4px; border: 2px solid #303030; border-radius: 10px; background: #1a1a1a; font-size: 23px; }
.segmented button { border-radius: 6px; padding-top: 2px; }
.segmented .is-on { background: #3a3a3a; color: #f2f2f2; }
.dialog footer { display: flex; justify-content: flex-end; gap: 16px; padding: 70px 36px 36px; }
.dialog footer button { height: 70px; border-radius: 10px; padding: 2px 29px 0; font-size: 25px; }
.cancel { background: #303030; color: #e6e6e6; }
.dialog .create { background: #2a6de6; color: #fff; font-weight: 600; font-size: 24px; }
```
FILE: rulers.js
```js
const NS = 'http://www.w3.org/2000/svg';
const PX_PER_MM = 5.144;
const ORIGIN = { x: 369, y: 155 };
const STRONG = [0, 125, 250];

function add(parent, name, attrs, text) {
  const el = document.createElementNS(NS, name);
  for (const key in attrs) el.setAttribute(key, attrs[key]);
  if (text !== undefined) el.textContent = text;
  parent.appendChild(el);
}

function steps(origin, length) {
  const out = [];
  for (let mm = Math.ceil(-origin / PX_PER_MM / 5) * 5; origin + mm * PX_PER_MM < length; mm += 5) {
    out.push({ mm, at: Math.round(origin + mm * PX_PER_MM) });
  }
  return out;
}

const rx = document.getElementById('ruler-x');
const ry = document.getElementById('ruler-y');
const canvas = document.getElementById('canvas');
const box = canvas.getBoundingClientRect();
const xs = steps(ORIGIN.x, box.width);
const ys = steps(ORIGIN.y, box.height);

for (const major of [false, true]) {
  const cls = major ? 'major' : 'minor';
  xs.filter(s => (s.mm % 50 === 0) === major).forEach(s => add(canvas, 'line', { x1: s.at, x2: s.at, y1: 0, y2: box.height, class: cls }));
  ys.filter(s => (s.mm % 50 === 0) === major).forEach(s => add(canvas, 'line', { y1: s.at, y2: s.at, x1: 0, x2: box.width, class: cls }));
}

xs.forEach(({ mm, at }) => {
  const labelled = mm % 25 === 0;
  add(rx, 'line', { x1: at, x2: at, y1: labelled ? 0 : 24, y2: 30, class: 'tick' });
  if (labelled) add(rx, 'text', { x: at + 5, y: 22, class: STRONG.includes(mm) ? 'strong' : '' }, mm);
});
ys.forEach(({ mm, at }) => {
  const labelled = mm % 25 === 0;
  add(ry, 'line', { y1: at, y2: at, x1: labelled ? 0 : 24, x2: 30, class: 'tick' });
  if (labelled) add(ry, 'text', { transform: `translate(20 ${at + 6}) rotate(-90)`, 'text-anchor': 'end', class: STRONG.includes(mm) ? 'strong' : '' }, mm);
});
```
